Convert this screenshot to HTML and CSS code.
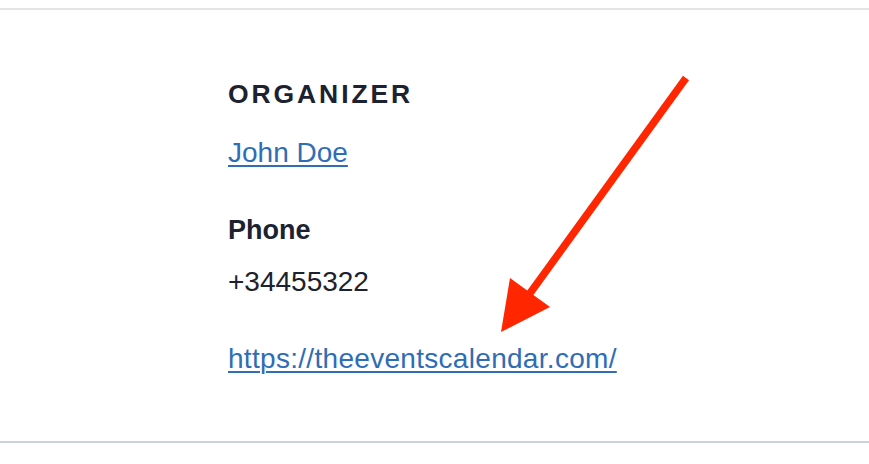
FILE: index.html
```html
<!DOCTYPE html>
<html lang="en">
<head>
<meta charset="utf-8">
<title>Organizer</title>
<link rel="stylesheet" href="styles.css">
</head>
<body>
<div class="page">
  <div class="top-rule"></div>
  <section class="organizer">
    <h2 class="organizer-title">ORGANIZER</h2>
    <a class="organizer-name" href="#">John Doe</a>
    <h3 class="organizer-label">Phone</h3>
    <p class="organizer-phone">+34455322</p>
    <a class="organizer-url" href="#">https://theeventscalendar.com/</a>
  </section>
  <svg class="annotation" width="869" height="464" viewBox="0 0 869 464" aria-hidden="true">
    <line x1="686" y1="78" x2="528" y2="296" stroke="#ff2600" stroke-width="7.5" stroke-linecap="butt"/>
    <polygon points="501,332 510,278 550,307" fill="#ff2600"/>
  </svg>
</div>
</body>
</html>
```
FILE: styles.css
```css
html, body {
  margin: 0;
  padding: 0;
  background: #ffffff;
}

.page {
  position: relative;
  width: 869px;
  height: 464px;
  overflow: hidden;
  font-family: "Liberation Sans", Arial, sans-serif;
  color: #1c2230;
}

.top-rule {
  height: 8px;
  border-bottom: 2px solid #e4e4e4;
}

.organizer {
  display: flex;
  flex-direction: column;
  align-items: flex-start;
  padding: 69px 0 65px 228px;
  border-bottom: 2px solid #cad3de;
}

.organizer-title {
  margin: 0;
  font-size: 26.5px;
  line-height: 30px;
  font-weight: 700;
  letter-spacing: 2.9px;
}

.organizer-name,
.organizer-url {
  color: #2f6db5;
  font-size: 28px;
  line-height: 34px;
  text-decoration: underline;
  text-decoration-thickness: 2px;
  text-underline-offset: 3px;
}

.organizer-name {
  margin-top: 27px;
}

.organizer-label {
  margin: 44px 0 0;
  font-size: 27px;
  line-height: 32px;
  font-weight: 700;
}

.organizer-phone {
  margin: 19px 0 0;
  font-size: 28px;
  line-height: 34px;
}

.organizer-url {
  margin-top: 43px;
  letter-spacing: 0.3px;
}

.annotation {
  position: absolute;
  left: 0;
  top: 0;
  pointer-events: none;
}
```
